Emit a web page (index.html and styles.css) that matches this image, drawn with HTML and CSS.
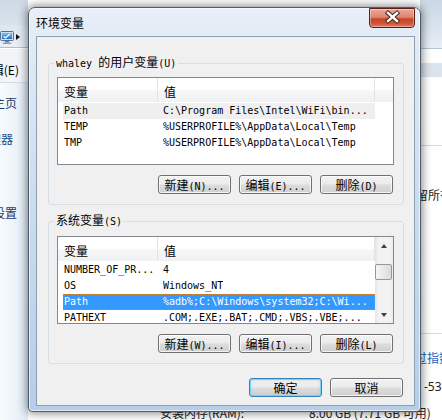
FILE: index.html
```html
<!DOCTYPE html>
<html lang="zh-CN">
<head>
<meta charset="utf-8">
<title>环境变量</title>
<link rel="stylesheet" href="styles.css">
</head>
<body>
<div class="desk">
  <aside class="bgl">
    <div class="bgl-glass"></div>
    <div class="bgl-tool">
      <svg class="mon" width="14" height="13" viewBox="0 0 14 13">
        <defs>
          <linearGradient id="scr" x1="0" y1="0" x2="0" y2="1">
            <stop offset="0" stop-color="#7cc0f5"/>
            <stop offset="1" stop-color="#1f6fd0"/>
          </linearGradient>
        </defs>
        <rect x="0.5" y="0.5" width="13" height="9" rx="1" fill="#d4dde7" stroke="#5b6f86"/>
        <rect x="2" y="2" width="10" height="6" fill="url(#scr)"/>
        <path d="M3.5 5.5 L5.5 7 L10 3" fill="none" stroke="#fff" stroke-width="1.2"/>
        <rect x="5" y="10" width="4" height="1.5" fill="#6d7f94"/>
        <rect x="3" y="11.5" width="8" height="1.5" fill="#8a9bb0"/>
      </svg>
      <span class="crumb"></span>
    </div>
    <div class="bgl-menu"><span>编辑(E)</span></div>
    <nav class="bgl-nav">
      <div class="nav n1"><span>控制面板主页</span></div>
      <div class="nav n2"><span>设备管理器</span></div>
      <div class="nav n3"><span>高级系统设置</span></div>
    </nav>
  </aside>
  <div class="bgr">
    <div class="bgr-glass"></div>
    <div class="bgr-gap"></div>
    <div class="bgr-band"></div>
    <div class="bgr-sec"></div>
    <div class="bgr-t t1">保留所有</div>
    <div class="bgr-line"></div>
    <div class="bgr-t t2">通过指数</div>
    <div class="bgr-t t3">-53</div>
  </div>
  <div class="bgb">
    <span class="ram-l">安装内存(RAM):</span>
    <span class="ram-v">8.00 GB (7.71 GB 可用)</span>
  </div>
</div>

<div class="dialog">
  <div class="titlebar">
    <span class="title">环境变量</span>
    <div class="close">
      <svg width="44" height="18" viewBox="0 0 44 18">
        <path d="M18 4 L27 12 M27 4 L18 12" stroke="#4a2420" stroke-width="4.4" stroke-linecap="square" fill="none"/>
        <path d="M18 4 L27 12 M27 4 L18 12" stroke="#ffffff" stroke-width="2.4" stroke-linecap="square" fill="none"/>
      </svg>
    </div>
  </div>
  <div class="client">
    <fieldset class="grp g1">
      <legend><span class="m">whaley </span>的用户变量<span class="m">(U)</span></legend>
      <div class="lv">
        <div class="lv-main">
          <div class="lv-head">
            <div class="hc c1">变量</div>
            <div class="hc c2">值</div>
          </div>
          <div class="lv-rows">
            <div class="row hot"><span class="k">Path</span><span class="v">C:\Program Files\Intel\WiFi\bin...</span></div>
            <div class="row"><span class="k">TEMP</span><span class="v">%USERPROFILE%\AppData\Local\Temp</span></div>
            <div class="row"><span class="k">TMP</span><span class="v">%USERPROFILE%\AppData\Local\Temp</span></div>
          </div>
        </div>
        <div class="lv-end"><div class="hc c3"></div></div>
      </div>
      <div class="btns">
        <button class="btn">新建<span class="m">(N)...</span></button>
        <button class="btn">编辑<span class="m">(E)...</span></button>
        <button class="btn">删除<span class="m">(D)</span></button>
      </div>
    </fieldset>

    <fieldset class="grp g2">
      <legend>系统变量<span class="m">(S)</span></legend>
      <div class="lv">
        <div class="lv-main">
          <div class="lv-head">
            <div class="hc c1">变量</div>
            <div class="hc c2">值</div>
          </div>
          <div class="lv-rows">
            <div class="row"><span class="k">NUMBER_OF_PR...</span><span class="v">4</span></div>
            <div class="row"><span class="k">OS</span><span class="v">Windows_NT</span></div>
            <div class="row sel"><span class="k">Path</span><span class="v">%adb%;C:\Windows\system32;C:\Wi...</span></div>
            <div class="row"><span class="k">PATHEXT</span><span class="v">.COM;.EXE;.BAT;.CMD;.VBS;.VBE;...</span></div>
          </div>
        </div>
        <div class="sb">
          <div class="sb-btn"><span class="tri-up"></span></div>
          <div class="thumb"></div>
          <div class="sb-fill"></div>
          <div class="sb-btn"><span class="tri-dn"></span></div>
        </div>
      </div>
      <div class="btns">
        <button class="btn">新建<span class="m">(W)...</span></button>
        <button class="btn">编辑<span class="m">(I)...</span></button>
        <button class="btn">删除<span class="m">(L)</span></button>
      </div>
    </fieldset>

    <div class="dlg-btns">
      <button class="btn ok">确定</button>
      <button class="btn">取消</button>
    </div>
  </div>
</div>
</body>
</html>
```
FILE: styles.css
```css
* { box-sizing: border-box; }
html, body { margin: 0; padding: 0; }
body {
  width: 442px;
  height: 420px;
  overflow: hidden;
  position: relative;
  background: #fff;
  font-family: "Noto Sans CJK SC", "Noto Sans", sans-serif;
  font-size: 12px;
  color: #000;
}
.m {
  font-family: "DejaVu Sans Mono", "Liberation Mono", monospace;
  font-size: 10px;
}

/* ---------- background windows ---------- */
.desk {
  display: grid;
  grid-template-columns: 28px 392px 22px;
  grid-template-rows: 406px 14px;
  width: 442px;
  height: 420px;
}
.bgl {
  grid-column: 1;
  grid-row: 1 / 3;
  display: flex;
  flex-direction: column;
  overflow: hidden;
}
.bgl-glass { height: 25px; flex: none; background: linear-gradient(#cdd9e5, #d9e3ed); }
.bgl-tool {
  height: 22px;
  flex: none;
  background: linear-gradient(#dde7f0, #e8eef5);
  display: flex;
  align-items: flex-start;
  padding-top: 6px;
}
.mon { display: block; flex: none; }
.crumb {
  width: 0;
  height: 0;
  border-left: 4px solid #111;
  border-top: 3.5px solid transparent;
  border-bottom: 3.5px solid transparent;
  margin: 3px 0 0 2px;
}
.bgl-menu {
  height: 36px;
  flex: none;
  border-top: 1px solid #a9c3d4;
  border-bottom: 1px solid #d3dce6;
  background: #f2f4f7;
  box-shadow: inset 0 1px 0 #fff;
  display: flex;
  justify-content: flex-end;
  padding: 14px 9px 0 0;
  line-height: 16px;
  white-space: nowrap;
}
.bgl-nav { flex: 1; background: linear-gradient(90deg, #f8fbfe, #e1ebf6); }
.nav {
  display: flex;
  justify-content: flex-end;
  white-space: nowrap;
  line-height: 16px;
  color: #1e3a66;
}
.n1 { margin-top: 12px; padding-right: 11px; }
.n2 { margin-top: 20px; padding-right: 15px; color: #234c8c; }
.n3 { margin-top: 58px; padding-right: 11px; }

.bgr {
  grid-column: 3;
  grid-row: 1;
  display: flex;
  flex-direction: column;
  overflow: hidden;
  background: #fff;
}
.bgr-glass { height: 49px; flex: none; background: linear-gradient(#cad7e4, #e7eef6); border-bottom: 1px solid #b4c6d6; }
.bgr-gap { height: 14px; flex: none; }
.bgr-band { height: 14px; flex: none; background: #dbe3ec; }
.bgr-sec { height: 69px; flex: none; border-bottom: 1px solid #dadada; }
.bgr-t { line-height: 16px; white-space: nowrap; flex: none; }
.t1 { margin-top: 41px; margin-left: -16px; color: #222; }
.bgr-line { margin-top: 130px; height: 1px; flex: none; background: #dadada; }
.t2 { margin-top: 16px; margin-left: -17px; color: #1f5fbf; }
.t3 { margin-top: 13px; margin-left: 4px; color: #222; font-family: "Noto Sans", sans-serif; }

.bgb {
  grid-column: 2 / 4;
  grid-row: 2;
  background: #fff;
  white-space: nowrap;
  line-height: 14px;
  padding-left: 132px;
  display: flex;
  overflow: hidden;
  color: #222;
}
.ram-l { width: 149px; flex: none; }
.ram-v { flex: none; }

/* ---------- dialog window ---------- */
.dialog {
  position: absolute;
  left: 28px;
  top: 7px;
  width: 393px;
  height: 405px;
  border: 1px solid #4f5b68;
  border-radius: 7px 7px 4px 4px;
  background: linear-gradient(#e7eff8 0%, #dae6f3 20%, #c8daee 55%, #b6cee9 100%);
  box-shadow: 0 0 10px 1px rgba(0, 0, 0, .5), inset 0 0 0 1px rgba(255, 255, 255, .6);
  padding: 0 5px 5px 7px;
  display: flex;
  flex-direction: column;
}
.titlebar {
  height: 28px;
  flex: none;
  display: flex;
  justify-content: space-between;
  align-items: center;
}
.title { line-height: 16px; padding-top: 1px; }
.close {
  align-self: flex-start;
  width: 46px;
  height: 20px;
  border: 1px solid #5d2018;
  border-radius: 0 0 4px 4px;
  background: linear-gradient(#eaa998 0%, #de8670 45%, #c9452c 55%, #cf5536 80%, #de7c63 100%);
  box-shadow: inset 0 0 0 1px rgba(255, 255, 255, .35);
}
.close svg { display: block; }
.client {
  height: 370px;
  flex: none;
  border: 1px solid #8f9fb1;
  background: #f0f0f0;
  padding: 18px 10px 12px 11px;
  display: flex;
  flex-direction: column;
}

/* group boxes */
.grp {
  margin: 0;
  width: 356px;
  min-width: 0;
  border: 1px solid #d5dfe5;
  border-radius: 3px;
  padding: 6px 9px 10px 8px;
}
.g2 { margin-top: 8px; padding-top: 7px; }
.grp legend {
  padding: 0 2px;
  margin-left: -3px;
  line-height: 14px;
  white-space: nowrap;
}

/* list views */
.lv {
  width: 337px;
  height: 88px;
  border: 1px solid #828790;
  background: #fff;
  display: flex;
  overflow: hidden;
}
.lv-main { width: 317px; flex: none; display: flex; flex-direction: column; }
.lv-head {
  height: 24px;
  flex: none;
  display: flex;
  background: linear-gradient(#fff 0%, #fff 45%, #f5f6f7 55%, #f0f1f3 100%);
}
.hc {
  height: 24px;
  border-right: 1px solid #e2e3e5;
  padding: 7px 0 0 6px;
  line-height: 14px;
  flex: none;
}
.c1 { width: 100px; }
.c2 { width: 217px; }
.lv-end { width: 18px; flex: none; }
.c3 {
  width: 18px;
  border-right: 0;
  background: linear-gradient(#fff 0%, #fff 45%, #f5f6f7 55%, #f0f1f3 100%);
}
.lv-rows { padding-top: 1px; }
.row {
  margin-left: 5px;
  width: 312px;
  height: 16px;
  display: flex;
  line-height: 16px;
  white-space: nowrap;
  font-family: "DejaVu Sans Mono", "Liberation Mono", monospace;
  font-size: 10px;
}
.k { width: 100px; flex: none; padding-left: 1px; overflow: hidden; }
.v { overflow: hidden; }
.hot { background: #efefef; }
.sel {
  background: #3399ff;
  color: #fff;
  outline: 1px dotted #c8823a;
  outline-offset: -1px;
}

/* scrollbar */
.sb {
  width: 18px;
  height: 86px;
  flex: none;
  background: linear-gradient(90deg, #e4e4e4, #f3f3f3 20%, #f3f3f3 80%, #eaeaea);
  display: flex;
  flex-direction: column;
}
.sb-btn {
  width: 17px;
  height: 17px;
  flex: none;
  display: flex;
  align-items: center;
  justify-content: center;
}
.tri-up {
  width: 0;
  height: 0;
  border-left: 3.5px solid transparent;
  border-right: 3.5px solid transparent;
  border-bottom: 4px solid #404040;
}
.tri-dn {
  width: 0;
  height: 0;
  border-left: 3.5px solid transparent;
  border-right: 3.5px solid transparent;
  border-top: 4px solid #404040;
}
.thumb {
  margin-top: 10px;
  width: 17px;
  height: 16px;
  flex: none;
  border: 1px solid #979797;
  border-radius: 2px;
  background: linear-gradient(90deg, #f6f6f6, #e9e9e9 50%, #dadada);
}
.sb-fill { flex: 1; }

/* buttons */
.btns {
  display: flex;
  justify-content: flex-end;
  gap: 8px;
  margin-top: 10px;
  padding-right: 1px;
}
.btn {
  width: 73px;
  height: 19px;
  padding: 0;
  border: 1px solid #707070;
  border-radius: 3px;
  background: linear-gradient(#f2f2f2 0%, #ebebeb 48%, #dddddd 52%, #cfcfcf 100%);
  box-shadow: inset 0 0 0 1px rgba(255, 255, 255, .75);
  font-family: "Noto Sans CJK SC", "Noto Sans", sans-serif;
  font-size: 12px;
  line-height: 17px;
  color: #000;
  text-align: center;
  white-space: nowrap;
}
.btn .m { font-size: 10px; }
.dlg-btns {
  margin-top: 14px;
  padding-right: 1px;
  display: flex;
  justify-content: flex-end;
  gap: 8px;
}
.ok {
  border-color: #3c7fb1;
  box-shadow: inset 0 0 0 1px #78d3f7, inset 0 0 3px 1px rgba(120, 210, 250, .5);
}
```
